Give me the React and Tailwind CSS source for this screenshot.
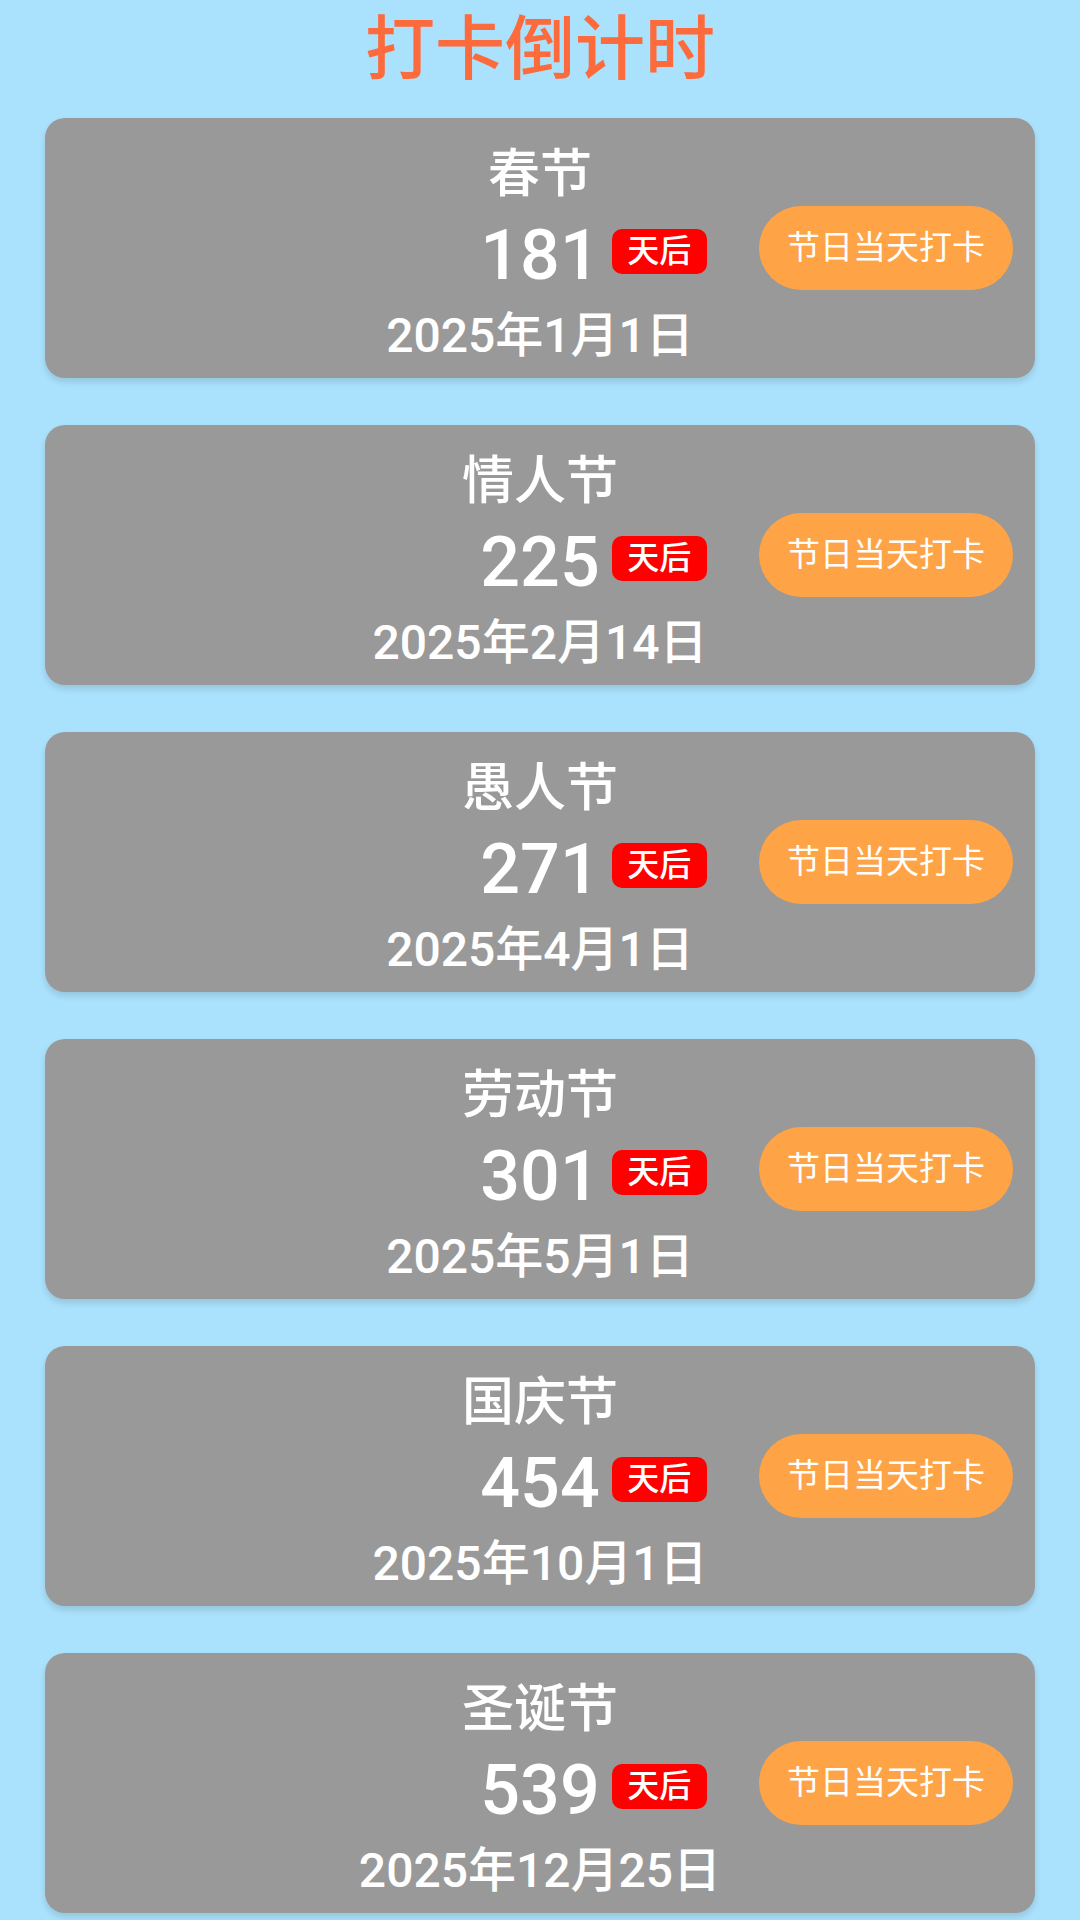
import React from "react";

const items = [
  { name: "春节", days: 181, date: "2025年1月1日" },
  { name: "情人节", days: 225, date: "2025年2月14日" },
  { name: "愚人节", days: 271, date: "2025年4月1日" },
  { name: "劳动节", days: 301, date: "2025年5月1日" },
  { name: "国庆节", days: 454, date: "2025年10月1日" },
  { name: "圣诞节", days: 539, date: "2025年12月25日" },
];

const font = { fontFamily: 'Roboto, "Noto Sans CJK SC", sans-serif' };

function Card({ name, days, date }) {
  return (
    <div className="mx-[45px] h-[260px] rounded-[20px] bg-[#999999] shadow-[0_4px_6px_rgba(0,0,0,0.12)] grid grid-cols-[1fr_auto_1fr]">
      <div />
      <div className="flex flex-col items-center pt-[25px] text-white font-medium">
        <div className="h-[64px] leading-[64px] text-[52px] whitespace-nowrap">{name}</div>
        <div className="mt-[5px] h-[86px] flex items-center justify-center">
          <div className="w-[107px]" />
          <div className="text-[70px] leading-[86px]">{days}</div>
          <div className="ml-[12px] mb-[8px] w-[95px] h-[45px] rounded-[10px] bg-[#ff0000] flex items-center justify-center text-[32px] leading-none">
            天后
          </div>
        </div>
        <div className="mt-[3px] h-[70px] leading-[70px] text-[48px] whitespace-nowrap">{date}</div>
      </div>
      <div className="flex items-center justify-end pr-[22px]">
        <div className="w-[254px] h-[84px] rounded-full bg-[#fea446] flex items-center justify-center text-white text-[33px] whitespace-nowrap">
          节日当天打卡
        </div>
      </div>
    </div>
  );
}

export default function App() {
  return (
    <div className="w-[1080px] min-h-[1920px] bg-[#aae1fc]" style={font}>
      <div className="h-[100px] flex items-center justify-center text-[70px] font-medium text-[#fd6a3c] leading-none">
        打卡倒计时
      </div>
      <div className="mt-[18px] flex flex-col gap-[47px]">
        {items.map((it) => (
          <Card key={it.name} {...it} />
        ))}
      </div>
    </div>
  );
}
